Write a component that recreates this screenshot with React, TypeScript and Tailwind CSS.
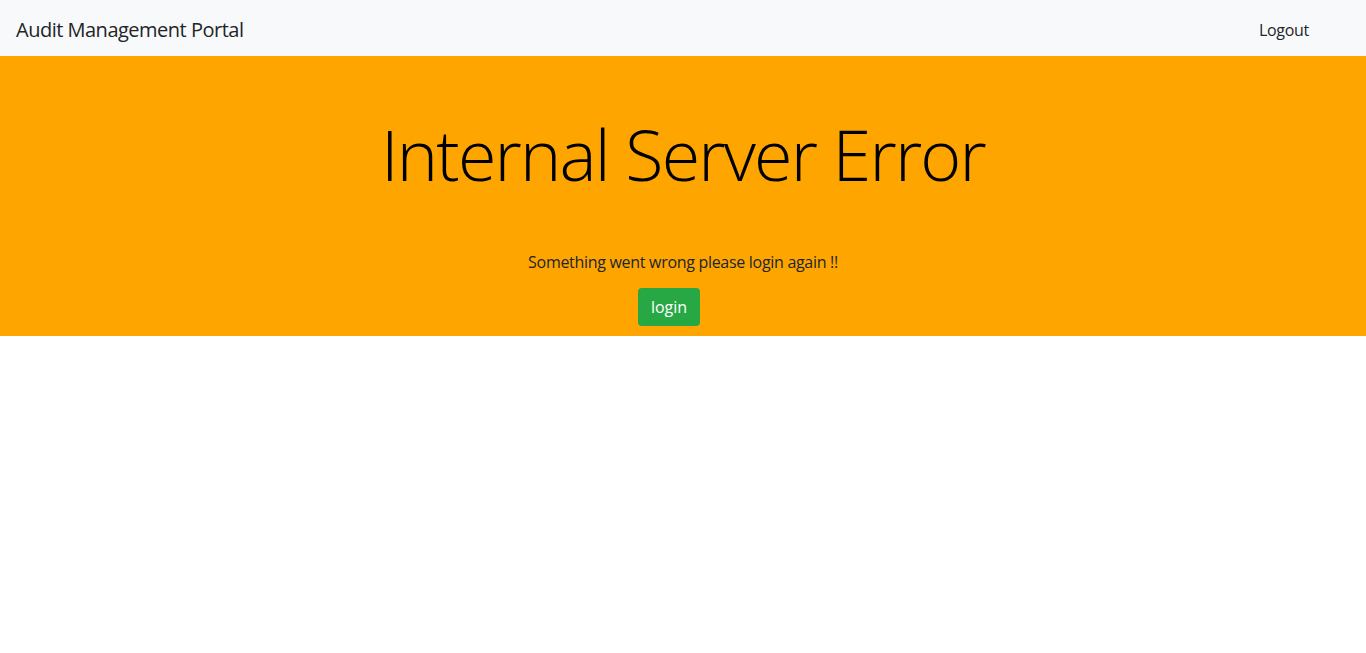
export default function App() {
  return (
    <div className="min-h-screen bg-white font-['Open_Sans',sans-serif] text-[#212529]">
      <nav className="flex h-14 items-center justify-between bg-[#f8f9fa] px-4 pt-1">
        <span className="text-xl tracking-[-0.5px]">Audit Management Portal</span>
        <a href="#" className="mr-[41px] text-base tracking-[-0.3px] text-[#212529]">
          Logout
        </a>
      </nav>

      <section className="flex h-[280px] flex-col items-center bg-[#ffa500]">
        <h1 className="mt-[56px] text-[70px] leading-[1.2] font-light tracking-[-1.8px] text-black">
          Internal Server Error
        </h1>
        <p className="mt-[54px] text-base leading-6 tracking-[-0.3px]">
          Something went wrong please login again !!
        </p>
        <button className="mt-[14px] mr-[28px] h-[38px] w-[62px] rounded bg-[#28a745] text-base text-white">
          login
        </button>
      </section>
    </div>
  );
}
